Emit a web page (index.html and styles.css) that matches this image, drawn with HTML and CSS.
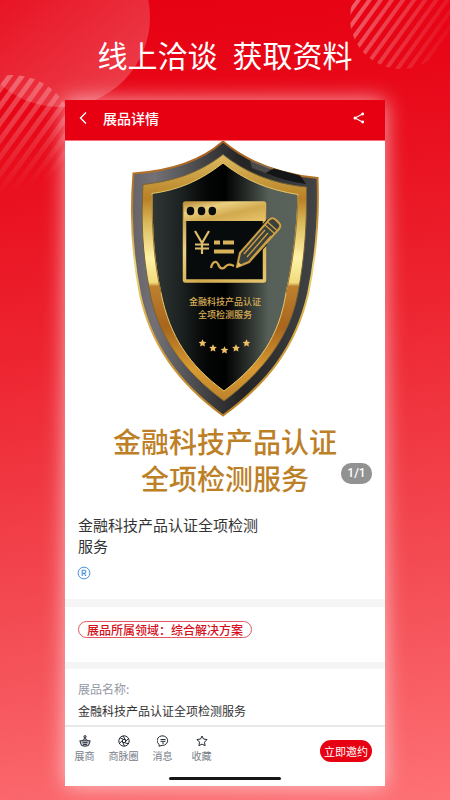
FILE: index.html
```html
<!DOCTYPE html>
<html lang="zh-CN">
<head>
<meta charset="utf-8">
<meta name="viewport" content="width=device-width, initial-scale=1">
<title>展品详情</title>
<link rel="stylesheet" href="styles.css">
</head>
<body>
<svg class="decor decor-left" width="160" height="210" viewBox="0 0 160 210" aria-hidden="true">
  <defs>
    <linearGradient id="disc" x1="0" y1="0" x2="1" y2="1">
      <stop offset="0.2" stop-color="#fff" stop-opacity="0.06"/>
      <stop offset="1" stop-color="#fff" stop-opacity="0.24"/>
    </linearGradient>
    <linearGradient id="fadeL" x1="0" y1="0" x2="0.3" y2="1">
      <stop offset="0" stop-color="#fff" stop-opacity="0.34"/>
      <stop offset="0.5" stop-color="#fff" stop-opacity="0.2"/>
      <stop offset="1" stop-color="#fff" stop-opacity="0"/>
    </linearGradient>
    <pattern id="barsL" width="10" height="10" patternUnits="userSpaceOnUse" patternTransform="rotate(36)">
      <rect width="5" height="10" fill="#fff"/>
    </pattern>
    <mask id="maskL"><rect width="160" height="210" fill="url(#barsL)"/></mask>
  </defs>
  <circle cx="60" cy="17" r="90" fill="url(#disc)"/>
  <g mask="url(#maskL)"><circle cx="12" cy="138" r="63" fill="url(#fadeL)"/></g>
</svg>
<svg class="decor decor-right" width="110" height="80" viewBox="340 0 110 80" aria-hidden="true">
  <defs>
    <linearGradient id="fadeR" x1="0" y1="0.3" x2="1" y2="0.7">
      <stop offset="0" stop-color="#fff" stop-opacity="0.38"/>
      <stop offset="1" stop-color="#fff" stop-opacity="0.02"/>
    </linearGradient>
    <pattern id="barsR" width="9" height="9" patternUnits="userSpaceOnUse" patternTransform="translate(356 0) rotate(36)">
      <rect width="4" height="9" fill="#fff"/>
    </pattern>
    <mask id="maskR"><rect x="340" width="110" height="80" fill="url(#barsR)"/></mask>
  </defs>
  <g mask="url(#maskR)"><circle cx="401" cy="18" r="51" fill="url(#fadeR)"/></g>
</svg>

<h1 class="slogan"><span>线上洽谈</span><span>获取资料</span></h1>

<main class="phone">
  <header class="bar">
    <button class="icon-button" type="button" aria-label="返回">
      <svg width="12" height="14" viewBox="0 0 12 14"><path d="M9 1.500 3.500 7 9 12.500" fill="none" stroke="#fff" stroke-width="1.400"/></svg>
    </button>
    <h2 class="bar-title">展品详情</h2>
    <button class="icon-button" type="button" aria-label="分享">
      <svg width="12" height="12" viewBox="0 0 12 12"><path d="M9.500 2 2 6l7.500 4" fill="none" stroke="#fff" stroke-width="1.100"/><circle cx="9.700" cy="2" r="1.400" fill="#fff"/><circle cx="2" cy="6" r="1.500" fill="#fff"/><circle cx="9.700" cy="10" r="1.400" fill="#fff"/></svg>
    </button>
  </header>

  <section class="gallery">
    <svg class="poster" viewBox="65 141 320 364" role="img" aria-label="金融科技产品认证 全项检测服务">
      <defs>
        <linearGradient id="rim" x1="0" y1="0" x2="0" y2="1">
          <stop offset="0" stop-color="#a95d20"/><stop offset="0.25" stop-color="#bd842c"/><stop offset="0.45" stop-color="#ecd476"/><stop offset="0.65" stop-color="#dcae48"/><stop offset="1" stop-color="#b98127"/>
        </linearGradient>
        <linearGradient id="steel" x1="0" y1="0" x2="1" y2="0">
          <stop offset="0" stop-color="#66646a"/><stop offset="0.12" stop-color="#737176"/><stop offset="0.35" stop-color="#4b4b4e"/><stop offset="0.5" stop-color="#302f31"/><stop offset="0.6" stop-color="#242424"/><stop offset="1" stop-color="#424446"/>
        </linearGradient>
        <linearGradient id="frame" x1="0" y1="0" x2="0" y2="1">
          <stop offset="0" stop-color="#ddbb63"/><stop offset="0.1" stop-color="#c89b3e"/><stop offset="0.18" stop-color="#b98025"/><stop offset="0.28" stop-color="#dabb5d"/><stop offset="0.42" stop-color="#fff2a6"/><stop offset="0.52" stop-color="#f0db7d"/><stop offset="0.535" stop-color="#bd812f"/><stop offset="0.7" stop-color="#a8651d"/><stop offset="0.87" stop-color="#d89b32"/><stop offset="1" stop-color="#bd812b"/>
        </linearGradient>
        <linearGradient id="field" x1="0" y1="0" x2="1" y2="0">
          <stop offset="0" stop-color="#303735"/><stop offset="0.2" stop-color="#1c2221"/><stop offset="0.37" stop-color="#050606"/><stop offset="0.5" stop-color="#000"/><stop offset="0.68" stop-color="#303632"/><stop offset="0.8" stop-color="#565f58"/><stop offset="1" stop-color="#5a635b"/>
        </linearGradient>
        <linearGradient id="gold" x1="0" y1="0" x2="1" y2="1">
          <stop offset="0" stop-color="#b88b38"/><stop offset="0.3" stop-color="#ead181"/><stop offset="0.6" stop-color="#d2a94e"/><stop offset="1" stop-color="#e6c66d"/>
        </linearGradient>
        <clipPath id="windowArea"><rect x="182" y="201" width="85" height="82"/></clipPath>
        <path id="star" d="M0-3.800 1.200-1.300 3.900-1 1.900.800 2.400 3.500 0 2.200-2.400 3.500-1.900.800-3.900-1-1.200-1.300Z"/>
      </defs>
      <path d="M223 141.500C200 162 170 171 133.500 173.500C130 216 132 254 140 294C151 345 178 382 223 415.500C269 382 296 345 308 294C316 257 319 218 317.500 178C276 174 245 160 223 141.500Z" fill="url(#steel)" stroke="url(#rim)" stroke-width="2"/>
      <path d="M250 160 273 168 266 173 252 168Z" fill="#6b6b6e" opacity="0.5"/>
      <path d="M266 173 274 168.500 300 175.500 306 184Q284 181 266 173Z" fill="#141516"/>
      <path d="M223 154.500C199 173 174 181 143 184.500C141 220 142 252 150 293C158 336 183 371 224 401C264 371 290 336 298 293C305 256 307 222 306.500 187C272 184 245 172 223 154.500Z" fill="url(#frame)" stroke="#756238" stroke-width="1"/>
      <path d="M223 163C200 181 178 190 152 193.500C152 230 154 261 161 293C170 337 189 365 224 391C259 365 279 337 286 293C293 261 297 230 298 194.500C269 190 244 180 223 163Z" fill="url(#field)" stroke="#e7c66a" stroke-width="1"/>
      <path d="M152 195C152 230 154 261 161 293M286 293C293 261 297 230 298 196" fill="none" stroke="#98702d" stroke-width="1"/>

      <rect x="184.500" y="203" width="80" height="78" rx="1" fill="#080b0b" stroke="url(#gold)" stroke-width="3.500"/>
      <rect x="184" y="202" width="81" height="19" fill="url(#gold)"/>
      <g fill="#080b0b"><ellipse cx="190.500" cy="211" rx="3.800" ry="4.200"/><ellipse cx="201.500" cy="211" rx="3.800" ry="4.200"/><ellipse cx="212.300" cy="211" rx="3.800" ry="4.200"/></g>
      <path d="m195 231 7 12 7-12M202 243v11M195 244.500h14M195 248.500h14" fill="none" stroke="#ddbd6d" stroke-width="2.200"/>
      <path d="M214 242.500h6M223 242.500h11M214 251.500h20" stroke="#d8b35c" stroke-width="4" fill="none"/>
      <path d="M211 268c1-6 5-8 7-4 2 5 5 6 8 2 3-3 6-1 8 0" fill="none" stroke="#d3a84e" stroke-width="2.200"/>
      <path d="m237 267 3-14 28-32q4-5 8-1l3 3q3 3-1 7l-29 32-12 5Z" fill="#111512" stroke="#111512" stroke-width="4" clip-path="url(#windowArea)"/>
      <path d="m237 267 3-14 28-32q4-5 8-1l3 3q3 3-1 7l-29 32-12 5Z" fill="#3a403a" stroke="#cf9f45" stroke-width="2" stroke-linejoin="round"/>
      <path d="m244 254 21-24M247 257l21-24M250 260l21-24M265 225l9 8" fill="none" stroke="#cf9f45" stroke-width="1.300"/>
      <path d="m267.500 222 9 8" stroke="#cf9f45" stroke-width="1.300"/>
      <path d="m237 267 1.500-5 3 3Z" fill="#e7bd65"/>

      <text class="badge-text" x="225" y="305">金融科技产品认证</text>
      <text class="badge-text" x="225" y="318">全项检测服务</text>
      <g fill="#eebf63"><use href="#star" x="202.500" y="343"/><use href="#star" x="213" y="348"/><use href="#star" x="224.500" y="350"/><use href="#star" x="236" y="348"/><use href="#star" x="246.500" y="343"/></g>

      <text class="poster-text" x="225" y="453">金融科技产品认证</text>
      <text class="poster-text" x="225" y="490">全项检测服务</text>
    </svg>
    <span class="counter">1/1</span>
  </section>

  <section class="summary">
    <h3 class="name">金融科技产品认证全项检测服务</h3>
    <svg class="mark" width="14" height="14" viewBox="0 0 14 14" role="img" aria-label="注册商标"><circle cx="7" cy="7" r="5.900" fill="none" stroke="#4c91e6" stroke-width="1"/><path d="M5.200 10V4.200H7.300a1.600 1.600 0 0 1 0 3.200H5.200M7.200 7.400 9 10" fill="none" stroke="#4c91e6" stroke-width="1.100"/></svg>
  </section>

  <section class="field-row"><span class="tag">展品所属领域：综合解决方案</span></section>

  <dl class="details">
    <dt>展品名称:</dt>
    <dd>金融科技产品认证全项检测服务</dd>
  </dl>

  <footer class="footer">
    <div class="actions">
      <nav class="tabs">
        <a class="tab" href="#exhibitor">
          <svg width="12" height="12" viewBox="0 0 12 12"><circle cx="6" cy="1.700" r="1.100"/><path d="M6 2.800v1M3.300 5.500Q6 2 8.700 5.500M.8 5.800h10.400L9.500 10.500Q6 12 2.500 10.500ZM3.500 7.700h5M4 9.400h4"/></svg>
          展商</a>
        <a class="tab" href="#circle">
          <svg width="12" height="12" viewBox="0 0 12 12"><circle cx="6" cy="6" r="5.200"/><circle cx="6" cy="6" r="1.700"/><path d="M5 1 7.500 5M10.500 3.500 7.600 6.500M10.300 8.700 6.500 7.700M6.500 11 4.500 7M1.300 8.500 4.400 5.500M2 2.800 5.500 4.300"/></svg>
          商脉圈</a>
        <a class="tab" href="#messages">
          <svg width="12" height="12" viewBox="0 0 12 12"><path d="M2 11.200V9.300A5.300 4.800 0 1 1 5 10.400ZM3.500 4.500h5M3.500 6.300h5M5 8h2"/></svg>
          消息</a>
        <a class="tab" href="#favorites">
          <svg width="12" height="12" viewBox="0 0 12 12"><path d="m6 1 1.500 3 3.500.600-2.500 2.500.600 3.600L6 9.100l-3.100 1.600.600-3.600L1 4.600 4.500 4Z"/></svg>
          收藏</a>
      </nav>
      <button class="invite" type="button">立即邀约</button>
    </div>
    <div class="home-line"></div>
  </footer>
</main>
</body>
</html>
```
FILE: styles.css
```css
* {
  box-sizing: border-box;
}

body {
  position: relative;
  min-height: 100vh;
  margin: 0;
  padding: 30px 65px 15px;
  background: linear-gradient(172deg, #e60012 0%, #e80717 14%, #ed2531 42%, #f5535a 78%, #fd7175 100%);
  font-family: "Noto Sans CJK SC", sans-serif;
  color: #333;
}

h1, h2, h3, dl, dd {
  margin: 0;
  font-weight: 400;
}

button {
  border: 0;
  font-family: inherit;
}

.decor {
  position: absolute;
  top: 0;
}

.decor-left {
  left: 0;
}

.decor-right {
  right: 0;
}

.slogan {
  position: relative;
  display: flex;
  justify-content: center;
  gap: 15px;
  margin-bottom: 22px;
  color: #fff;
  font-size: 30px;
  line-height: 48px;
  white-space: nowrap;
}

.phone {
  position: relative;
  background: #fff;
  box-shadow: 0 0 20px rgba(255, 255, 255, 0.65);
}

.bar {
  display: flex;
  align-items: center;
  height: 41px;
  padding: 0 20px 4px 12px;
  background: #e60012;
  border-bottom: 1px solid #f6707a;
}

.icon-button {
  display: flex;
  padding: 0;
  background: none;
}

.bar-title {
  flex: 1;
  margin-left: 14px;
  color: #fff;
  font-size: 14px;
  font-weight: 500;
  line-height: 20px;
}

.gallery {
  position: relative;
}

.poster {
  display: block;
  width: 100%;
}

.badge-text {
  fill: #d9ae55;
  font-size: 9px;
  font-weight: 500;
  text-anchor: middle;
}

.poster-text {
  fill: #bd8027;
  font-size: 28px;
  font-weight: 500;
  text-anchor: middle;
}

.counter {
  position: absolute;
  right: 13px;
  bottom: 21px;
  width: 31px;
  border-radius: 10px;
  background: #929292;
  color: #fff;
  font-family: Roboto, sans-serif;
  font-size: 12px;
  font-weight: 500;
  line-height: 21px;
  text-align: center;
}

.summary {
  padding: 9px 13px 19px;
  border-bottom: 8px solid #f5f5f5;
}

.name {
  max-width: 190px;
  font-size: 15px;
  line-height: 21px;
}

.mark {
  display: block;
  margin: 10px 0 0 -1px;
}

.field-row {
  display: flex;
  padding: 14px 13px 24px;
  border-bottom: 7px solid #f5f5f5;
}

.tag {
  padding: 0 8px;
  border: 1px solid #e45560;
  border-radius: 9px;
  color: #d5101c;
  font-size: 12px;
  font-weight: 500;
  line-height: 15px;
}

.details {
  padding: 9px 13px 3px;
  font-size: 12px;
  line-height: 22px;
}

.details dt {
  color: #9499a5;
}

.footer {
  padding-bottom: 6px;
  border-top: 2px solid #e8e8e8;
}

.actions {
  display: flex;
  align-items: center;
  justify-content: space-between;
  padding: 8px 13px 0 0;
}

.tabs {
  display: flex;
}

.tab {
  display: flex;
  flex-direction: column;
  align-items: center;
  gap: 2px;
  width: 39px;
  padding-bottom: 3px;
  color: #767b85;
  font-size: 10px;
  line-height: 14px;
  text-decoration: none;
}

.tab svg {
  fill: none;
  stroke: #252a36;
  stroke-width: 1;
}

.tab:first-child svg {
  fill: #cfd2d8;
}

.invite {
  width: 52px;
  height: 22px;
  padding: 0;
  border-radius: 11px;
  background: #e60012;
  color: #fff;
  font-size: 11px;
  line-height: 22px;
}

.home-line {
  width: 35%;
  height: 3px;
  margin: 11px auto 0;
  border-radius: 2px;
  background: #151515;
}
```
